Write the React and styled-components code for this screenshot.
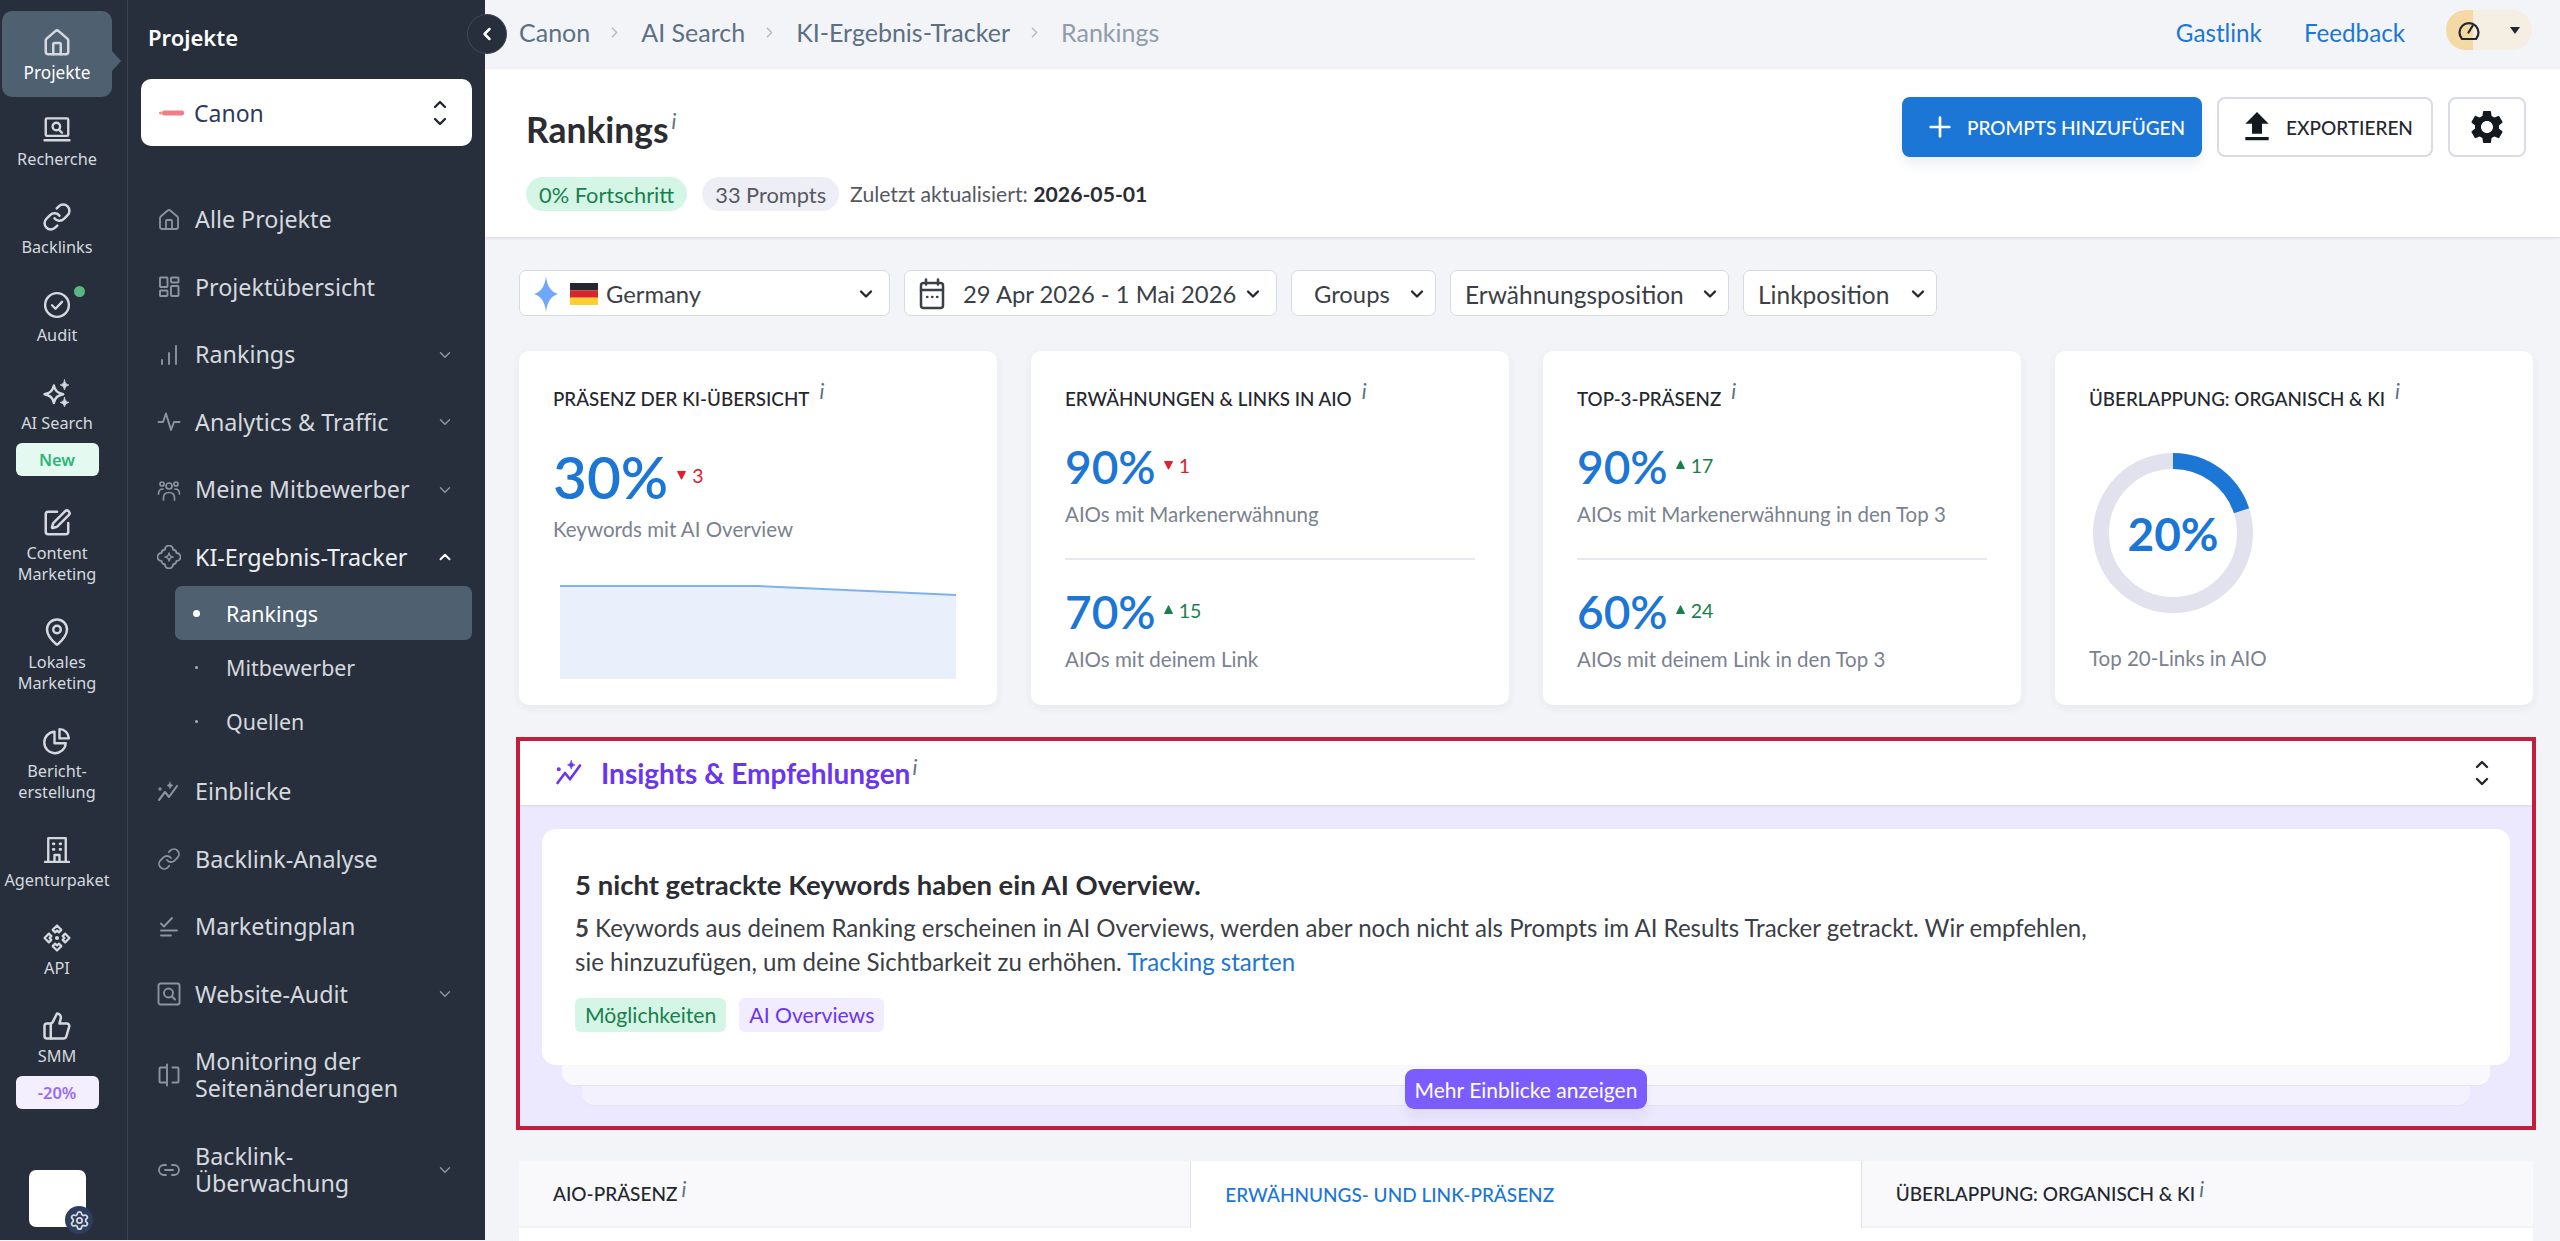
import React from "react";
import styled, { createGlobalStyle } from "styled-components";
import { House, Link, SquarePen, MapPin, ThumbsUp, ChevronDown, ChevronUp, ChevronRight, ChevronLeft, Settings, Plus, Link2 } from "lucide-react";
import { MdSettings, MdFileUpload } from "react-icons/md";

const GlobalStyle = createGlobalStyle`
  html, body {
    margin: 0;
    width: 2560px;
    height: 1241px;
    overflow: hidden;
    background: #f3f4f8;
    font-family: "Lato", "Liberation Sans", sans-serif;
    color: #2b2d33;
  }
  * { box-sizing: border-box; }
`;

const Page = styled.div`
  display: flex;
  width: 2560px;
  height: 1241px;
`;

/* icon rail */
const Rail = styled.aside`
  width: 128px;
  height: 1240px;
  flex: none;
  display: flex;
  flex-direction: column;
  padding: 11px 15px 13px 2px;
  background: #272f3c;
  border-right: 1px solid #3a4350;
  font-family: "Noto Sans", sans-serif;
`;

const RailItem = styled.div`
  position: relative;
  width: 110px;
  display: flex;
  flex-direction: column;
  align-items: center;
  padding: ${(p) => (p.$active ? "17px 0 14px" : "16.5px 0 15.5px")};
  border-radius: 10px;
  background: ${(p) => (p.$active ? "#4f6071" : "transparent")};
  color: ${(p) => (p.$active ? "#fff" : "#d5d9df")};
  &::after {
    content: "";
    display: ${(p) => (p.$active ? "block" : "none")};
    position: absolute;
    right: -9px;
    top: 40px;
    border-left: 9px solid #4f6071;
    border-top: 10px solid transparent;
    border-bottom: 10px solid transparent;
  }
`;

const RailIcon = styled.div`
  position: relative;
  height: 30px;
  margin-bottom: ${(p) => (p.$active ? "4px" : "5px")};
  display: flex;
  align-items: center;
  justify-content: center;
  color: #d5d9df;
  svg { width: 30px; height: 30px; display: block; }
`;

const RailDot = styled.span`
  position: absolute;
  top: -4px;
  right: -13px;
  width: 11px;
  height: 11px;
  border-radius: 50%;
  background: #5ab784;
`;

const RailLabel = styled.div`
  font-size: ${(p) => (p.$active ? "17.2px" : "16.3px")};
  line-height: 21px;
  text-align: center;
  white-space: nowrap;
`;

const RailBadge = styled.div`
  width: 83px;
  height: 33px;
  margin-top: 9px;
  display: flex;
  align-items: center;
  justify-content: center;
  border-radius: 6px;
  font-size: 16.5px;
  font-weight: 600;
  background: ${(p) => (p.$purple ? "#f3effe" : "#e4f9ef")};
  color: ${(p) => (p.$purple ? "#9b6cf0" : "#2fb577")};
`;

const Avatar = styled.div`
  position: relative;
  width: 57px;
  height: 57px;
  margin: auto 0 0 27px;
  border-radius: 7px;
  background: #fff;
`;

const AvatarGear = styled.div`
  position: absolute;
  right: -7px;
  bottom: -7px;
  width: 28px;
  height: 28px;
  border-radius: 50%;
  background: #2f3e5c;
  color: #d5d9df;
  display: flex;
  align-items: center;
  justify-content: center;
`;

/* project nav */
const Nav = styled.nav`
  position: relative;
  width: 357px;
  height: 1240px;
  flex: none;
  padding: 22px 13px 0;
  background: #272f3c;
  font-family: "Noto Sans", sans-serif;
`;

const NavTitle = styled.div`
  padding-left: 7px;
  font-size: 22px;
  line-height: 30px;
  font-weight: 600;
  color: #fff;
`;

const ProjectSelect = styled.div`
  height: 67px;
  margin: 27px 0 40px;
  padding: 0 24px 0 18px;
  display: flex;
  align-items: center;
  background: #fff;
  border-radius: 10px;
  font-size: 23px;
  color: #2e3a5c;
  svg.logo { margin-right: 10px; }
  svg.updown { margin-left: auto; }
`;

const NavRow = styled.div`
  display: flex;
  align-items: center;
  padding: 20.25px 18px 20.25px 16px;
  font-size: 23.3px;
  line-height: 27px;
  color: ${(p) => (p.$open ? "#eef0f3" : "#d5d9df")};
  svg.main { width: 24px; height: 24px; flex: none; margin-right: 14px; color: #8a94a2; }
  svg.caret { width: 18px; height: 18px; flex: none; margin-left: auto; color: ${(p) => (p.$open ? "#fff" : "#8a94a2")}; }
`;

const SubList = styled.div`
  margin: -5px 0 10px 34px;
`;

const SubRow = styled.div`
  height: 54px;
  display: flex;
  align-items: center;
  border-radius: 7px;
  padding-left: ${(p) => (p.$active ? "18px" : "20px")};
  font-size: 21.4px;
  background: ${(p) => (p.$active ? "#4f6071" : "transparent")};
  color: ${(p) => (p.$active ? "#fff" : "#d5d9df")};
`;

const SubDot = styled.span`
  flex: none;
  width: ${(p) => (p.$active ? "7px" : "3px")};
  height: ${(p) => (p.$active ? "7px" : "3px")};
  margin-right: ${(p) => (p.$active ? "26px" : "28px")};
  border-radius: 50%;
  background: ${(p) => (p.$active ? "#fff" : "#a8b0ba")};
`;

const CollapseButton = styled.div`
  position: absolute;
  top: 14px;
  right: -22px;
  z-index: 3;
  width: 40px;
  height: 40px;
  border-radius: 50%;
  display: flex;
  align-items: center;
  justify-content: center;
  background: #272f3c;
  border: 1px solid #3f4856;
  color: #fff;
`;

/* main column */
const Main = styled.main`
  flex: 1;
  min-width: 0;
  display: flex;
  flex-direction: column;
`;

const TopBar = styled.header`
  height: 69px;
  flex: none;
  display: flex;
  align-items: center;
  padding: 0 28px 5px 34px;
  font-size: 24.2px;
`;

const Crumb = styled.span`
  font-size: 25px;
  color: ${(p) => (p.$last ? "#8f9caa" : "#5b7083")};
`;

const CrumbSep = styled(ChevronRight)`
  width: 17px;
  height: 17px;
  margin: 0 18px 0 16px;
  color: #b1bac4;
`;

const TopLink = styled.a`
  margin-left: ${(p) => (p.$first ? "auto" : "42px")};
  color: #1c76d5;
`;

const SpeedPill = styled.div`
  width: 86px;
  height: 40px;
  margin: -4px 0 0 41px;
  display: flex;
  align-items: center;
  justify-content: space-between;
  padding: 0 12px 0 11px;
  border-radius: 20px;
  background: linear-gradient(90deg, #f5d9a4 27px, #f5efe3 27px);
`;

const Caret = styled.span`
  border-top: 7px solid #23272f;
  border-left: 5.5px solid transparent;
  border-right: 5.5px solid transparent;
`;

const PageHead = styled.section`
  height: 168px;
  flex: none;
  padding: 28px 34px 0 41px;
  background: #fff;
  box-shadow: 0 1px 3px rgba(30, 40, 70, 0.14);
`;

const HeadTop = styled.div`
  display: flex;
  align-items: center;
  height: 60px;
`;

const PageTitle = styled.h1`
  margin: 6px 0 0;
  font-size: 35.4px;
  line-height: 40px;
  font-weight: 700;
  color: #2b2d33;
`;

const Info = styled.span`
  position: relative;
  top: ${(p) => p.$up || "-7px"};
  margin-left: ${(p) => p.$gap || "6px"};
  font-style: italic;
  font-weight: 400;
  font-size: 21px;
  line-height: 0;
  color: #5b7083;
`;

const HeadActions = styled.div`
  margin-left: auto;
  display: flex;
  gap: 15px;
`;

const ActionButton = styled.button`
  height: 60px;
  width: ${(p) => p.$w};
  display: flex;
  align-items: center;
  justify-content: center;
  gap: ${(p) => p.$gap || "0"};
  padding: ${(p) => (p.$primary ? "0 0 0 5px" : "0")};
  font-family: inherit;
  font-size: 19px;
  font-weight: 500;
  border-radius: 8px;
  border: ${(p) => (p.$primary ? "0" : "2px solid #d9dbe7")};
  background: ${(p) => (p.$primary ? "#1c76d5" : "#fff")};
  color: ${(p) => (p.$primary ? "#fff" : "#23272f")};
  box-shadow: ${(p) => (p.$primary ? "0 8px 12px rgba(40,60,110,.08)" : "none")};
`;

const HeadMeta = styled.div`
  display: flex;
  align-items: center;
  margin-top: 20px;
  font-size: 21.8px;
  color: #55595f;
`;

const Pill = styled.span`
  height: 34px;
  display: flex;
  align-items: center;
  padding: 0 13px;
  margin-right: 15px;
  border-radius: 17px;
  background: ${(p) => (p.$green ? "#d5f5e6" : "#eeeff6")};
  color: ${(p) => (p.$green ? "#1a7f4d" : "#55595f")};
`;

const Updated = styled.span`
  margin-left: -4px;
  font-size: 21.2px;
  b { font-weight: 700; color: #2b2d33; }
`;

const Content = styled.div`
  flex: 1;
  min-height: 0;
  display: flex;
  flex-direction: column;
  padding: 33px 27px 0 34px;
`;

const Filters = styled.div`
  display: flex;
  gap: 14px;
  margin-bottom: 35px;
`;

const Filter = styled.div`
  width: ${(p) => p.$w};
  height: 46px;
  display: flex;
  align-items: center;
  padding: ${(p) => p.$pad || "2px 13px 0 14px"};
  background: #fff;
  border: 1px solid #d8dae6;
  border-radius: 7px;
  font-size: ${(p) => p.$fs || "23.8px"};
  color: #3b3f46;
  white-space: nowrap;
  svg.caret { margin-left: auto; flex: none; color: #23272f; }
`;

const FilterFlag = styled.svg`
  width: 28px;
  height: 22px;
  margin: 0 8px 0 12px;
`;

const Cards = styled.div`
  display: grid;
  grid-template-columns: repeat(4, 1fr);
  gap: 34px;
  height: 354px;
  flex: none;
`;

const Card = styled.div`
  padding: 36px 34px 0;
  background: #fff;
  border-radius: 10px;
  box-shadow: 0 3px 10px rgba(40, 50, 90, 0.06);
`;

const CardTitle = styled.div`
  font-size: 18.8px;
  line-height: 24px;
  font-weight: 500;
  color: #23272f;
  white-space: nowrap;
`;

const ValueRow = styled.div`
  display: flex;
  align-items: center;
  margin-top: ${(p) => p.$top};
  height: ${(p) => (p.$big ? "60px" : "50px")};
`;

const Value = styled.span`
  font-size: ${(p) => (p.$big ? "58.5px" : "46px")};
  font-weight: 600;
  color: #1c76d5;
`;

const Delta = styled.span`
  display: flex;
  align-items: center;
  gap: 6px;
  margin: ${(p) => (p.$big ? "-2px 0 0 9px" : "-2px 0 0 8px")};
  font-size: 19.5px;
  color: ${(p) => (p.$up ? "#1a7f4d" : "#e0202f")};
  svg { width: 9px; height: 10px; fill: currentColor; transform: ${(p) => (p.$up ? "rotate(180deg)" : "none")}; }
`;

const CardSub = styled.div`
  margin-top: ${(p) => p.$top || "11px"};
  font-size: 20.5px;
  line-height: 24px;
  color: #7a8290;
  white-space: nowrap;
`;

const CardRule = styled.div`
  height: 2px;
  margin: 32px 0 26px;
  background: #e8e8f2;
`;

const Spark = styled.svg`
  display: block;
  width: 396px;
  height: 94px;
  margin: 44px 0 0 7px;
`;

const Donut = styled.div`
  position: relative;
  width: 160px;
  height: 160px;
  margin: 42px 0 0 4px;
  display: flex;
  align-items: center;
  justify-content: center;
  font-size: 46px;
  font-weight: 700;
  color: #1c76d5;
  svg { position: absolute; inset: 0; }
`;

/* insights block */
const Insights = styled.section`
  flex: none;
  height: 393px;
  margin: 32px -3px 31px;
  border: 4px solid #c41e3e;
  background: #ece8fd;
  display: flex;
  flex-direction: column;
`;

const InsightsHead = styled.div`
  height: 66px;
  flex: none;
  display: flex;
  align-items: center;
  padding: 0 42px 0 35px;
  background: #fff;
  border-bottom: 2px solid #e2def5;
  svg.trend { color: #6a35f0; margin-right: 16px; }
  svg.updown { margin-left: auto; }
`;

const InsightsTitle = styled.div`
  font-size: 28px;
  font-weight: 700;
  color: #6a35f0;
`;

const InsightsBody = styled.div`
  position: relative;
  padding: 22px 22px 0;
`;

const InsightCard = styled.div`
  height: 236px;
  padding: 39px 33px 0;
  background: #fff;
  border-radius: 14px;
`;

const InsightHeading = styled.div`
  font-size: 27.5px;
  line-height: 34px;
  font-weight: 700;
  color: #2b2d33;
`;

const InsightText = styled.p`
  margin: 9px 0 19px;
  font-size: 24.05px;
  line-height: 34px;
  color: #3b3f46;
  b { font-weight: 700; }
  a { color: #1c76d5; }
`;

const Tags = styled.div`
  display: flex;
  gap: 13px;
`;

const Tag = styled.span`
  height: 34px;
  display: flex;
  align-items: center;
  padding: 0 10px;
  border-radius: 6px;
  font-size: 21.2px;
  background: ${(p) => (p.$purple ? "#f1ecff" : "#d5f5e6")};
  color: ${(p) => (p.$purple ? "#6a35f0" : "#1a7f4d")};
`;

const StackLayer = styled.div`
  height: ${(p) => (p.$back ? "20px" : "21px")};
  margin: ${(p) => (p.$back ? "0 40px" : "0 20px")};
  border-radius: 0 0 12px 12px;
  background: ${(p) => (p.$back ? "#f2f1fd" : "#f9f9fd")};
  border-bottom: 1px solid #e4e2f4;
`;

const MoreButton = styled.button`
  position: absolute;
  left: 885px;
  top: 262px;
  width: 242px;
  height: 40px;
  border: 0;
  border-radius: 9px;
  font-family: inherit;
  font-size: 21px;
  color: #fff;
  background: #7a5cff;
  box-shadow: 0 10px 10px rgba(80, 60, 160, 0.06);
`;

const TabPanel = styled.div`
  flex: 1;
  background: #fff;
  min-height: 0;
`;

const Tabs = styled.div`
  display: grid;
  grid-template-columns: repeat(3, 1fr);
  height: 67px;
`;

const Tab = styled.div`
  display: flex;
  align-items: center;
  padding-left: 34px;
  font-size: 19px;
  font-weight: 500;
  white-space: nowrap;
  background: ${(p) => (p.$active ? "#fff" : "#f9f9fc")};
  color: ${(p) => (p.$active ? "#1c76d5" : "#23272f")};
  border-left: ${(p) => (p.$active ? "1px solid #dfe1ea" : "0")};
  border-right: ${(p) => (p.$active ? "1px solid #dfe1ea" : "0")};
  border-bottom: ${(p) => (p.$active ? "0" : "2px solid #f1f1f6")};
`;

const Icon = ({ children, className, size = 24, sw = 1.9 }) => (
  <svg className={className} width={size} height={size} viewBox="0 0 24 24" fill="none" stroke="currentColor" strokeWidth={sw} strokeLinecap="round" strokeLinejoin="round">
    {children}
  </svg>
);

const UpDown = ({ color = "#23272f" }) => (
  <svg className="updown" width="16" height="30" viewBox="0 0 16 30" fill="none" stroke={color} strokeWidth="2.4" strokeLinecap="round" strokeLinejoin="round">
    <path d="M3 9l5-5 5 5M3 21l5 5 5-5" />
  </svg>
);

const Research = () => (
  <Icon>
    <rect x="3" y="3.5" width="18" height="14" rx="1" />
    <path d="M2 21h20M13.7 12.7 16 15" />
    <circle cx="11.5" cy="10" r="3" />
  </Icon>
);

const Audit = () => (
  <Icon>
    <circle cx="12" cy="12" r="9.5" />
    <path d="M8 12.2l2.8 2.8L16 9.5" />
  </Icon>
);

const Sparkle = () => (
  <Icon>
    <path d="M9.5 6 Q10.5 12 17 13 Q10.5 14 9.5 20 Q8.5 14 2 13 Q8.5 12 9.5 6Z" />
    <path fill="currentColor" strokeWidth="0.6" d="M18 1.5 Q18.4 5 21.5 5.5 Q18.4 6 18 9.5 Q17.6 6 14.5 5.5 Q17.6 5 18 1.5Z" />
    <path fill="currentColor" strokeWidth="0.6" d="M18 15.5 Q18.4 19 21.5 19.5 Q18.4 20 18 23 Q17.6 20 14.5 19.5 Q17.6 19 18 15.5Z" />
  </Icon>
);

const Report = () => (
  <Icon>
    <path d="M10 4.6a8.6 8.6 0 1 0 9 9.2h-9z" />
    <path d="M14 2.5a7.6 7.6 0 0 1 7.5 7.4H14z" />
  </Icon>
);

const Agency = () => (
  <Icon>
    <path d="M5 21V2.5h14V21M2.5 21.5h19M10 21v-5h4v5" />
    <path d="M9 7h.6M14.4 7h.6M9 11.5h.6M14.4 11.5h.6" strokeWidth="2.2" />
  </Icon>
);

const Api = () => (
  <Icon sw={1.7}>
    <path d="M8.5 5.5 12 2l3.5 3.5-2 2L12 6l-1.5 1.5z" />
    <path d="M8.5 18.5 12 22l3.5-3.5-2-2L12 18l-1.5-1.5z" />
    <path d="M5.5 8.5 2 12l3.5 3.5 2-2L6 12l1.5-1.5z" />
    <path d="M18.5 8.5 22 12l-3.5 3.5-2-2L18 12l-1.5-1.5z" />
    <circle cx="12" cy="12" r="0.8" fill="currentColor" />
  </Icon>
);

const GridIcon = ({ className }) => (
  <Icon className={className}>
    <rect x="3" y="2.5" width="7.5" height="9.5" rx="0.8" />
    <rect x="14" y="2.5" width="7.5" height="5" rx="0.8" />
    <rect x="3" y="15.5" width="7.5" height="5.5" rx="0.8" />
    <rect x="14" y="11" width="7.5" height="10" rx="0.8" />
  </Icon>
);

const BarsIcon = ({ className }) => (
  <Icon className={className}>
    <path d="M5 21v-4M12 21V10M19 21V3" />
  </Icon>
);

const ActivityIcon = ({ className }) => (
  <Icon className={className}>
    <path d="M1.5 12H6L9 3.5 14 20l3-8h5.5" />
  </Icon>
);

const TeamIcon = ({ className }) => (
  <Icon className={className} sw={1.7}>
    <circle cx="5" cy="6" r="2" />
    <circle cx="19" cy="6" r="2" />
    <circle cx="12" cy="8" r="3" />
    <path d="M1.5 16c0-3 1.5-5 4.5-5M22.5 16c0-3-1.5-5-4.5-5M6.5 22v-2c0-3.5 2-5.5 5.5-5.5s5.5 2 5.5 5.5v2" />
  </Icon>
);

const TrackerIcon = ({ className }) => (
  <Icon className={className}>
    <path d="M8 4.5a4 4 0 0 1 8 0 4 4 0 0 1 3.5 3.5 4 4 0 0 1 0 8 4 4 0 0 1-3.5 3.5 4 4 0 0 1-8 0A4 4 0 0 1 4.5 16a4 4 0 0 1 0-8A4 4 0 0 1 8 4.5z" />
    <path strokeWidth="1.5" d="M12 8 Q12.4 11.6 16 12 Q12.4 12.4 12 16 Q11.6 12.4 8 12 Q11.6 11.6 12 8Z" />
  </Icon>
);

const TrendIcon = ({ className, size = 24 }) => (
  <Icon className={className} size={size} sw={2.1}>
    <path d="M2 20l6-8 4 5 8-11" />
    <circle cx="3" cy="9" r="0.6" fill="currentColor" />
    <path fill="currentColor" strokeWidth="0.5" d="M13 2 Q13.3 5 16 5.5 Q13.3 6 13 9 Q12.7 6 10 5.5 Q12.7 5 13 2Z" />
  </Icon>
);

const PlanIcon = ({ className }) => (
  <Icon className={className}>
    <path d="M4 8.5l3 3L15 3M4 15.5h16M4 20.5h10" />
  </Icon>
);

const SearchBoxIcon = ({ className }) => (
  <Icon className={className}>
    <rect x="1.5" y="1.5" width="21" height="21" rx="2" />
    <circle cx="11.5" cy="11" r="4.5" />
    <path d="M15 14.5l3 3" />
  </Icon>
);

const SplitIcon = ({ className }) => (
  <Icon className={className}>
    <path d="M10 4.5H3.5a1 1 0 0 0-1 1v13a1 1 0 0 0 1 1H10M10 1.5v21M15.5 4.5h5a1 1 0 0 1 1 1v13a1 1 0 0 1-1 1h-5" />
  </Icon>
);

const DownTriangle = () => (
  <svg viewBox="0 0 11 12"><path d="M1 1h9c.6 0 1 .5.8 1L6.3 11c-.3.5-1.3.5-1.6 0L.2 2C0 1.5.4 1 1 1z" /></svg>
);

const railTop = [
  { label: "Recherche", icon: <Research /> },
  { label: "Backlinks", icon: <Link /> },
  { label: "Audit", icon: <Audit />, dot: true },
];

const railBottom = [
  { label: "Content\nMarketing", icon: <SquarePen /> },
  { label: "Lokales\nMarketing", icon: <MapPin /> },
  { label: "Bericht-\nerstellung", icon: <Report /> },
  { label: "Agenturpaket", icon: <Agency /> },
  { label: "API", icon: <Api /> },
];

const lines = (text) => text.split("\n").map((t) => <div key={t}>{t}</div>);

const navTop = [
  { label: "Alle Projekte", icon: <House className="main" strokeWidth={1.8} /> },
  { label: "Projektübersicht", icon: <GridIcon className="main" /> },
  { label: "Rankings", icon: <BarsIcon className="main" />, caret: true },
  { label: "Analytics & Traffic", icon: <ActivityIcon className="main" />, caret: true },
  { label: "Meine Mitbewerber", icon: <TeamIcon className="main" />, caret: true },
];

const navBottom = [
  { label: "Einblicke", icon: <TrendIcon className="main" /> },
  { label: "Backlink-Analyse", icon: <Link className="main" strokeWidth={1.8} /> },
  { label: "Marketingplan", icon: <PlanIcon className="main" /> },
  { label: "Website-Audit", icon: <SearchBoxIcon className="main" />, caret: true },
  { label: "Monitoring der\nSeitenänderungen", icon: <SplitIcon className="main" /> },
  { label: "Backlink-\nÜberwachung", icon: <Link2 className="main" strokeWidth={1.8} />, caret: true },
];

const NavEntry = ({ item }) => (
  <NavRow>
    {item.icon}
    <div>{lines(item.label)}</div>
    {item.caret && <ChevronDown className="caret" strokeWidth={2} />}
  </NavRow>
);

const Stat = ({ value, delta, up, sub, top }) => (
  <>
    <ValueRow $top={top}>
      <Value>{value}</Value>
      <Delta $up={up}>
        <DownTriangle />
        {delta}
      </Delta>
    </ValueRow>
    <CardSub>{sub}</CardSub>
  </>
);

export default function App() {
  return (
    <Page>
      <GlobalStyle />
      <Rail>
        <RailItem $active>
          <RailIcon $active>
            <House />
          </RailIcon>
          <RailLabel $active>Projekte</RailLabel>
        </RailItem>
        {railTop.map((item) => (
          <RailItem key={item.label}>
            <RailIcon>
              {item.icon}
              {item.dot && <RailDot />}
            </RailIcon>
            <RailLabel>{item.label}</RailLabel>
          </RailItem>
        ))}
        <RailItem>
          <RailIcon>
            <Sparkle />
          </RailIcon>
          <RailLabel>AI Search</RailLabel>
          <RailBadge>New</RailBadge>
        </RailItem>
        {railBottom.map((item) => (
          <RailItem key={item.label}>
            <RailIcon>{item.icon}</RailIcon>
            <RailLabel>{lines(item.label)}</RailLabel>
          </RailItem>
        ))}
        <RailItem>
          <RailIcon>
            <ThumbsUp />
          </RailIcon>
          <RailLabel>SMM</RailLabel>
          <RailBadge $purple>-20%</RailBadge>
        </RailItem>
        <Avatar>
          <AvatarGear>
            <Settings size={21} />
          </AvatarGear>
        </Avatar>
      </Rail>

      <Nav>
        <CollapseButton>
          <ChevronLeft size={20} strokeWidth={3} />
        </CollapseButton>
        <NavTitle>Projekte</NavTitle>
        <ProjectSelect>
          <svg className="logo" width="25" height="8" viewBox="0 0 25 8">
            <rect x="3" y="1.5" width="22" height="5" rx="2" fill="#ee5a68" opacity="0.8" />
            <circle cx="1.5" cy="4" r="1.5" fill="#f28a94" />
          </svg>
          Canon
          <UpDown />
        </ProjectSelect>
        {navTop.map((item) => (
          <NavEntry key={item.label} item={item} />
        ))}
        <NavRow $open>
          <TrackerIcon className="main" />
          <div>KI-Ergebnis-Tracker</div>
          <ChevronUp className="caret" strokeWidth={2.6} />
        </NavRow>
        <SubList>
          <SubRow $active>
            <SubDot $active />
            Rankings
          </SubRow>
          <SubRow>
            <SubDot />
            Mitbewerber
          </SubRow>
          <SubRow>
            <SubDot />
            Quellen
          </SubRow>
        </SubList>
        {navBottom.map((item) => (
          <NavEntry key={item.label} item={item} />
        ))}
      </Nav>

      <Main>
        <TopBar>
          <Crumb>Canon</Crumb>
          <CrumbSep />
          <Crumb>AI Search</Crumb>
          <CrumbSep />
          <Crumb>KI-Ergebnis-Tracker</Crumb>
          <CrumbSep />
          <Crumb $last>Rankings</Crumb>
          <TopLink $first>Gastlink</TopLink>
          <TopLink>Feedback</TopLink>
          <SpeedPill>
            <svg width="24" height="24" viewBox="0 0 24 24" fill="none" stroke="#23272f" strokeWidth="2.2" strokeLinecap="round">
              <path d="M5 21a9.5 9.5 0 1 1 14 0z" />
              <path d="M11.5 14.5 15.5 8" />
            </svg>
            <Caret />
          </SpeedPill>
        </TopBar>

        <PageHead>
          <HeadTop>
            <PageTitle>
              Rankings
              <Info $gap="3px" $up="-14px">i</Info>
            </PageTitle>
            <HeadActions>
              <ActionButton $primary $w="300px" $gap="11px">
                <Plus size={32} strokeWidth={2} />
                PROMPTS HINZUFÜGEN
              </ActionButton>
              <ActionButton $w="216px" $gap="9px">
                <MdFileUpload size={40} color="#14181f" />
                EXPORTIEREN
              </ActionButton>
              <ActionButton $w="78px">
                <MdSettings size={40} color="#14181f" />
              </ActionButton>
            </HeadActions>
          </HeadTop>
          <HeadMeta>
            <Pill $green>0% Fortschritt</Pill>
            <Pill>33 Prompts</Pill>
            <Updated>
              Zuletzt aktualisiert: <b>2026-05-01</b>
            </Updated>
          </HeadMeta>
        </PageHead>

        <Content>
          <Filters>
            <Filter $w="371px">
              <svg width="24" height="36" viewBox="0 0 24 36">
                <path fill="#6fa8fb" d="M12 0 Q13.5 15 24 18 Q13.5 21 12 36 Q10.5 21 0 18 Q10.5 15 12 0Z" />
              </svg>
              <FilterFlag viewBox="0 0 28 22">
                <rect width="28" height="7.4" fill="#23272f" />
                <rect y="7.4" width="28" height="7.3" fill="#d8242b" />
                <rect y="14.7" width="28" height="7.3" fill="#fbcf2f" />
              </FilterFlag>
              Germany
              <ChevronDown className="caret" size={20} strokeWidth={2.8} />
            </Filter>
            <Filter $w="373px">
              <svg width="26" height="32" viewBox="0 0 26 32" fill="none" stroke="#3b3f46" strokeWidth="2.5" strokeLinecap="round" style={{ marginRight: 18 }}>
                <rect x="2" y="5" width="22" height="25" rx="2.5" />
                <path d="M2 12h22M7 1.5v5M19 1.5v5" />
                <path d="M8 19h.5M13 19h.5M18 19h.5" strokeWidth="2.3" />
              </svg>
              29 Apr 2026 - 1 Mai 2026
              <ChevronDown className="caret" size={20} strokeWidth={2.8} />
            </Filter>
            <Filter $w="145px" $pad="2px 8px 0 22px">
              Groups
              <ChevronDown className="caret" size={20} strokeWidth={2.8} />
            </Filter>
            <Filter $w="279px" $pad="2px 8px 0 14px" $fs="24.5px">
              Erwähnungsposition
              <ChevronDown className="caret" size={20} strokeWidth={2.8} />
            </Filter>
            <Filter $w="194px" $pad="2px 8px 0 14px" $fs="24.5px">
              Linkposition
              <ChevronDown className="caret" size={20} strokeWidth={2.8} />
            </Filter>
          </Filters>

          <Cards>
            <Card>
              <CardTitle>
                PRÄSENZ DER KI-ÜBERSICHT
                <Info $gap="10px">i</Info>
              </CardTitle>
              <ValueRow $big $top="35px">
                <Value $big>30%</Value>
                <Delta $big>
                  <DownTriangle />3
                </Delta>
              </ValueRow>
              <CardSub>Keywords mit AI Overview</CardSub>
              <Spark viewBox="0 0 396 94" preserveAspectRatio="none">
                <path d="M0 1 L198 1 L396 10 L396 94 L0 94Z" fill="#e9f0fb" />
                <path d="M0 1 L198 1 L396 10" fill="none" stroke="#7eb2ee" strokeWidth="2" />
              </Spark>
            </Card>
            <Card>
              <CardTitle>
                ERWÄHNUNGEN &amp; LINKS IN AIO
                <Info $gap="10px">i</Info>
              </CardTitle>
              <Stat value="90%" delta="1" sub="AIOs mit Markenerwähnung" top="30px" />
              <CardRule />
              <Stat value="70%" delta="15" up sub="AIOs mit deinem Link" />
            </Card>
            <Card>
              <CardTitle>
                TOP-3-PRÄSENZ
                <Info $gap="10px">i</Info>
              </CardTitle>
              <Stat value="90%" delta="17" up sub="AIOs mit Markenerwähnung in den Top 3" top="30px" />
              <CardRule />
              <Stat value="60%" delta="24" up sub="AIOs mit deinem Link in den Top 3" />
            </Card>
            <Card>
              <CardTitle>
                ÜBERLAPPUNG: ORGANISCH &amp; KI
                <Info $gap="10px">i</Info>
              </CardTitle>
              <Donut>
                <svg width="160" height="160" viewBox="0 0 160 160" fill="none" strokeWidth="16">
                  <circle cx="80" cy="80" r="72" stroke="#e1e2ee" />
                  <path d="M80 8 A72 72 0 0 1 148.5 57.8" stroke="#1c76d5" />
                </svg>
                20%
              </Donut>
              <CardSub $top="33px">Top 20-Links in AIO</CardSub>
            </Card>
          </Cards>

          <Insights>
            <InsightsHead>
              <TrendIcon className="trend" size={30} />
              <InsightsTitle>
                Insights &amp; Empfehlungen
                <Info $gap="2px" $up="-9px">i</Info>
              </InsightsTitle>
              <UpDown />
            </InsightsHead>
            <InsightsBody>
              <InsightCard>
                <InsightHeading>5 nicht getrackte Keywords haben ein AI Overview.</InsightHeading>
                <InsightText>
                  <b>5</b> Keywords aus deinem Ranking erscheinen in AI Overviews, werden aber noch nicht als Prompts im AI Results Tracker getrackt. Wir empfehlen,
                  <br />
                  sie hinzuzufügen, um deine Sichtbarkeit zu erhöhen. <a>Tracking starten</a>
                </InsightText>
                <Tags>
                  <Tag>Möglichkeiten</Tag>
                  <Tag $purple>AI Overviews</Tag>
                </Tags>
              </InsightCard>
              <StackLayer />
              <StackLayer $back />
              <MoreButton>Mehr Einblicke anzeigen</MoreButton>
            </InsightsBody>
          </Insights>

          <Tabs>
            <Tab>
              AIO-PRÄSENZ
              <Info $gap="4px" $up="-5px">i</Info>
            </Tab>
            <Tab $active>ERWÄHNUNGS- UND LINK-PRÄSENZ</Tab>
            <Tab>
              ÜBERLAPPUNG: ORGANISCH &amp; KI
              <Info $gap="4px" $up="-5px">i</Info>
            </Tab>
          </Tabs>
          <TabPanel />
        </Content>
      </Main>
    </Page>
  );
}
